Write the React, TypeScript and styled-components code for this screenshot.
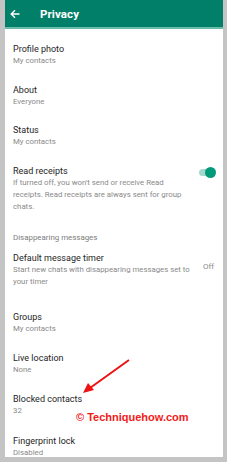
import React from "react";
import styled, { createGlobalStyle } from "styled-components";

const Global = createGlobalStyle`
  html, body { margin: 0; padding: 0; background: #c4c4c4; }
  body { font-family: Roboto, "Noto Sans", Arial, sans-serif; -webkit-font-smoothing: antialiased; }
  #root { width: 227px; height: 462px; overflow: hidden; }
`;

const Frame = styled.div`
  position: relative;
  margin: 0 4px 0 5px;
  height: 457px;
  overflow: hidden;
  background: #ffffff;
  display: flex;
  flex-direction: column;
`;

const Header = styled.header`
  flex-shrink: 0;
  height: 27px;
  background: #017f68;
  border-bottom: 2px solid #68bcaa;
  display: flex;
  align-items: center;
  color: #fff;
`;

const Back = styled.span`
  width: 35px;
  display: flex;
  align-items: center;
  padding-left: 5px;
  box-sizing: border-box;
`;

const Title = styled.h1`
  margin: 0;
  font-size: 11.5px;
  font-weight: 700;
  letter-spacing: 0.1px;
`;

const List = styled.div`
  flex-shrink: 0;
  padding-top: 6px;
  display: flex;
  flex-direction: column;
`;

const Item = styled.div<{ $extra?: number }>`
  display: flex;
  align-items: center;
  padding: 8px 8px 8.5px 8px;
  margin-bottom: ${(p) => p.$extra ?? 0}px;
`;

const Texts = styled.div`
  flex: 1;
  min-width: 0;
`;

const Name = styled.div`
  font-size: 9px;
  line-height: 12px;
  color: #1e1e1e;
`;

const Sub = styled.div`
  font-size: 7.8px;
  line-height: 12px;
  color: #8a8a8a;
  white-space: nowrap;
`;

const Section = styled.div`
  padding: 11px 8px 0 8px;
  font-size: 7.9px;
  line-height: 12px;
  color: #7c7c7c;
`;

const Value = styled.div`
  font-size: 8px;
  color: #8a8a8a;
  align-self: flex-start;
  padding-top: 10px;
  margin-left: 4px;
  margin-right: 1px;
`;

const Toggle = styled.div`
  position: relative;
  width: 17px;
  height: 11px;
  margin-right: -1px;
  align-self: flex-start;
  margin-top: 2px;
`;

const Track = styled.div`
  position: absolute;
  left: 0;
  top: 2px;
  width: 15px;
  height: 7px;
  border-radius: 4px;
  background: #a5d8cd;
`;

const Knob = styled.div`
  position: absolute;
  right: 0;
  top: 0;
  width: 11px;
  height: 11px;
  border-radius: 50%;
  background: #009a7a;
`;

const Watermark = styled.div`
  position: absolute;
  left: 71px;
  top: 411px;
  font-family: "Liberation Sans", Arial, sans-serif;
  font-weight: 700;
  font-size: 11px;
  color: #f31a1a;
  white-space: nowrap;
`;

const ArrowSvg = styled.svg`
  position: absolute;
  left: 65px;
  top: 350px;
`;

export default function App() {
  return (
    <>
      <Global />
      <Frame>
        <Header>
          <Back>
            <svg width="10" height="10" viewBox="0 0 10 10">
              <path d="M9.5 5H1.5M5 1.2L1.2 5L5 8.8" stroke="#fff" strokeWidth="1.4" fill="none" />
            </svg>
          </Back>
          <Title>Privacy</Title>
        </Header>
        <List>
          <Item>
            <Texts>
              <Name>Profile photo</Name>
              <Sub>My contacts</Sub>
            </Texts>
          </Item>
          <Item>
            <Texts>
              <Name>About</Name>
              <Sub>Everyone</Sub>
            </Texts>
          </Item>
          <Item>
            <Texts>
              <Name>Status</Name>
              <Sub>My contacts</Sub>
            </Texts>
          </Item>
          <Item>
            <Texts>
              <Name>Read receipts</Name>
              <Sub>
                If turned off, you won't send or receive Read
                <br />
                receipts. Read receipts are always sent for group
                <br />
                chats.
              </Sub>
            </Texts>
            <Toggle>
              <Track />
              <Knob />
            </Toggle>
          </Item>
          <Section>Disappearing messages</Section>
          <Item $extra={6.5}>
            <Texts>
              <Name>Default message timer</Name>
              <Sub>
                Start new chats with disappearing messages set to
                <br />
                your timer
              </Sub>
            </Texts>
            <Value>Off</Value>
          </Item>
          <Item>
            <Texts>
              <Name>Groups</Name>
              <Sub>My contacts</Sub>
            </Texts>
          </Item>
          <Item $extra={1}>
            <Texts>
              <Name>Live location</Name>
              <Sub>None</Sub>
            </Texts>
          </Item>
          <Item $extra={1}>
            <Texts>
              <Name>Blocked contacts</Name>
              <Sub>32</Sub>
            </Texts>
          </Item>
          <Item>
            <Texts>
              <Name>Fingerprint lock</Name>
              <Sub>Disabled</Sub>
            </Texts>
          </Item>
        </List>
        <ArrowSvg width="70" height="50" viewBox="0 0 70 50">
          <line x1="59" y1="10" x2="20" y2="38" stroke="#ee1111" strokeWidth="2" />
          <polygon points="13,43 18,33 24,40" fill="#ee1111" />
        </ArrowSvg>
        <Watermark>© Techniquehow.com</Watermark>
      </Frame>
    </>
  );
}
